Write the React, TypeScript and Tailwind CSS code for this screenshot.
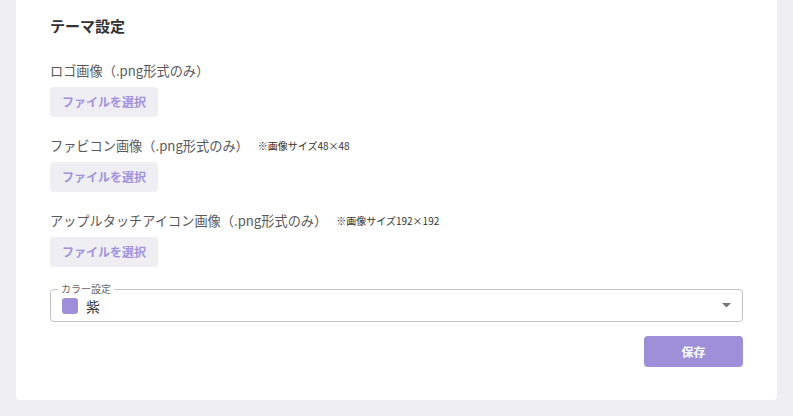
import React from 'react';

const uploads = [
    { label: 'ロゴ画像（.png形式のみ）', note: '' },
    { label: 'ファビコン画像（.png形式のみ）', note: '※画像サイズ48×48' },
    { label: 'アップルタッチアイコン画像（.png形式のみ）', note: '※画像サイズ192×192' },
];

const FileField: React.FC<{ label: string; note: string; first?: boolean }> = ({ label, note, first }) => (
    <div className={first ? 'mt-[24px]' : 'mt-[19px]'}>
        <div className="flex items-center h-[20px]">
            <span className="text-[13.2px] text-[#5a5a5a] leading-[20px]">{label}</span>
            {note && <span className="ml-[9px] text-[10px] text-[#333333] leading-[20px]">{note}</span>}
        </div>
        <button
            type="button"
            className="mt-[6px] h-[30px] px-3 rounded bg-[#efeef3] text-[12px] font-bold text-[#a093db]"
        >
            ファイルを選択
        </button>
    </div>
);

export default function App() {
    return (
        <div
            className="min-h-[416px] bg-[#efeff2] px-4 pb-4"
            style={{ fontFamily: '"Noto Sans CJK JP", "Noto Sans", sans-serif' }}
        >
            <div className="bg-white rounded-b px-[34px] pt-[15px] pb-[33px]">
                <h2 className="text-[15px] font-bold leading-[22px] text-[#333333]">テーマ設定</h2>

                {uploads.map((u, i) => (
                    <FileField key={u.label} label={u.label} note={u.note} first={i === 0} />
                ))}

                {/* color select */}
                <div className="relative mt-[22px] h-[33px] rounded border border-[#c4c4c4] flex items-center pl-[11px] pr-[11px]">
                    <span className="absolute left-[7px] -top-[8px] bg-white px-[3px] text-[10px] leading-[14px] text-[#666666]">
                        カラー設定
                    </span>
                    <span className="w-[16px] h-[16px] rounded-[3px] bg-[#9d8fd8]" />
                    <span className="ml-[8px] text-[14px] text-[#333333] leading-[20px]">紫</span>
                    <svg className="ml-auto" width="9" height="5" viewBox="0 0 9 5">
                        <path d="M0 0l4.5 4.5 4.5-4.5z" fill="#757575" />
                    </svg>
                </div>

                <div className="flex justify-end mt-[14px]">
                    <button
                        type="button"
                        className="w-[99px] h-[31px] rounded bg-[#9d8fd8] text-white text-[12px] font-bold"
                    >
                        保存
                    </button>
                </div>
            </div>
        </div>
    );
}
